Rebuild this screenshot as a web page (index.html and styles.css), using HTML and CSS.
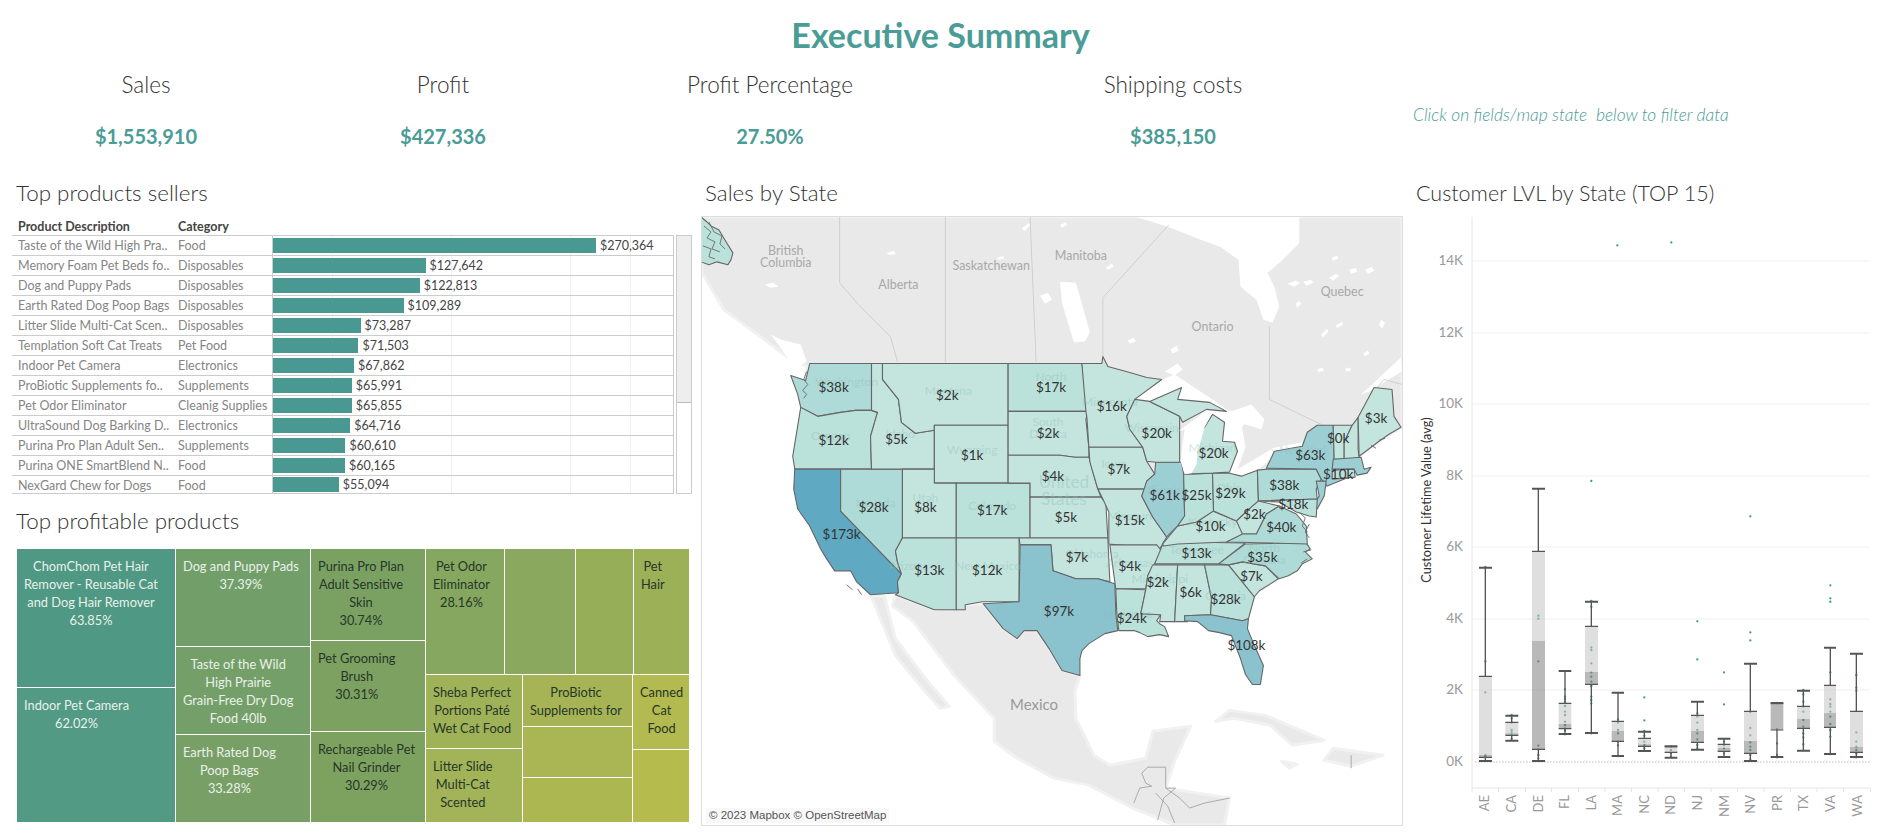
FILE: index.html
```html
<!DOCTYPE html>
<html lang="en">
<head>
<meta charset="utf-8">
<title>Executive Summary</title>
<link rel="stylesheet" href="styles.css">
</head>
<body>
<div class="page">
  <h1 class="title">Executive Summary</h1>
  <section class="kpis">
    <div class="kpi"><div class="kpi-label">Sales</div><div class="kpi-value">$1,553,910</div></div>
    <div class="kpi"><div class="kpi-label">Profit</div><div class="kpi-value">$427,336</div></div>
    <div class="kpi"><div class="kpi-label">Profit Percentage</div><div class="kpi-value">27.50%</div></div>
    <div class="kpi"><div class="kpi-label">Shipping costs</div><div class="kpi-value">$385,150</div></div>
    <div class="hint">Click on fields/map state&nbsp; below to filter data</div>
  </section>
  <main class="dash">
    <section class="col-left">
      <h2 class="heading">Top products sellers</h2>
      <div class="table-head"><span class="th-name">Product Description</span><span>Category</span></div>
      <div class="table-wrap">
        <div class="table">
          <div class="row"><span class="name">Taste of the Wild High Pra..</span><span class="cat">Food</span><div class="barcell"><i class="bar" style="width:323px"></i><span class="val">$270,364</span></div></div>
          <div class="row"><span class="name">Memory Foam Pet Beds fo..</span><span class="cat">Disposables</span><div class="barcell"><i class="bar" style="width:152.5px"></i><span class="val">$127,642</span></div></div>
          <div class="row"><span class="name">Dog and Puppy Pads</span><span class="cat">Disposables</span><div class="barcell"><i class="bar" style="width:146.7px"></i><span class="val">$122,813</span></div></div>
          <div class="row"><span class="name">Earth Rated Dog Poop Bags</span><span class="cat">Disposables</span><div class="barcell"><i class="bar" style="width:130.6px"></i><span class="val">$109,289</span></div></div>
          <div class="row"><span class="name">Litter Slide Multi-Cat Scen..</span><span class="cat">Disposables</span><div class="barcell"><i class="bar" style="width:87.6px"></i><span class="val">$73,287</span></div></div>
          <div class="row"><span class="name">Templation Soft Cat Treats</span><span class="cat">Pet Food</span><div class="barcell"><i class="bar" style="width:85.4px"></i><span class="val">$71,503</span></div></div>
          <div class="row"><span class="name">Indoor Pet Camera</span><span class="cat">Electronics</span><div class="barcell"><i class="bar" style="width:81.1px"></i><span class="val">$67,862</span></div></div>
          <div class="row"><span class="name">ProBiotic Supplements fo..</span><span class="cat">Supplements</span><div class="barcell"><i class="bar" style="width:78.8px"></i><span class="val">$65,991</span></div></div>
          <div class="row"><span class="name">Pet Odor Eliminator</span><span class="cat">Cleanig Supplies</span><div class="barcell"><i class="bar" style="width:78.7px"></i><span class="val">$65,855</span></div></div>
          <div class="row"><span class="name">UltraSound Dog Barking D..</span><span class="cat">Electronics</span><div class="barcell"><i class="bar" style="width:77.3px"></i><span class="val">$64,716</span></div></div>
          <div class="row"><span class="name">Purina Pro Plan Adult Sen..</span><span class="cat">Supplements</span><div class="barcell"><i class="bar" style="width:72.4px"></i><span class="val">$60,610</span></div></div>
          <div class="row"><span class="name">Purina ONE SmartBlend N..</span><span class="cat">Food</span><div class="barcell"><i class="bar" style="width:71.9px"></i><span class="val">$60,165</span></div></div>
          <div class="row row-last"><span class="name">NexGard Chew for Dogs</span><span class="cat">Food</span><div class="barcell"><i class="bar" style="width:65.8px"></i><span class="val">$55,094</span></div></div>
        </div>
        <div class="scroll"><div class="thumb"></div></div>
      </div>
      <h2 class="heading heading-2">Top profitable products</h2>
      <div class="tm">
        <div class="tm-col" style="flex-basis:158px">
          <div class="tile light" style="flex-basis:138px;background:#4f9883"><div class="tt">ChomChom Pet Hair<br>Remover - Reusable Cat<br>and Dog Hair Remover<br>63.85%</div></div>
          <div class="tile light grow" style="background:#529a84"><div class="tt">Indoor Pet Camera<br>62.02%</div></div>
        </div>
        <div class="tm-col" style="flex-basis:134px">
          <div class="tile light" style="flex-basis:97px;background:#729f69"><div class="tt">Dog and Puppy Pads<br>37.39%</div></div>
          <div class="tile light" style="flex-basis:87px;background:#759f68"><div class="tt">Taste of the Wild<br>High Prairie<br>Grain-Free Dry Dog<br>Food 40lb</div></div>
          <div class="tile light grow" style="background:#789f66"><div class="tt">Earth Rated Dog<br>Poop Bags<br>33.28%</div></div>
        </div>
        <div class="tm-col" style="flex-basis:114px">
          <div class="tile dark" style="flex-basis:91px;background:#7aa162"><div class="tt">Purina Pro Plan<br>Adult Sensitive<br>Skin<br>30.74%</div></div>
          <div class="tile dark" style="flex-basis:90px;background:#7ca160"><div class="tt">Pet Grooming<br>Brush<br>30.31%</div></div>
          <div class="tile dark grow" style="background:#7da260"><div class="tt">Rechargeable Pet<br>Nail Grinder<br>30.29%</div></div>
        </div>
        <div class="tm-rest">
          <div class="tm-row tm-top">
            <div class="tile dark" style="flex-basis:78px;background:#85a75f"><div class="tt">Pet Odor<br>Eliminator<br>28.16%</div></div>
            <div class="tile" style="flex-basis:70px;background:#8aa95e"></div>
            <div class="tile" style="flex-basis:57px;background:#97ae59"></div>
            <div class="tile dark grow" style="background:#9cb058"><div class="tt">Pet<br>Hair</div></div>
          </div>
          <div class="tm-row grow">
            <div class="tm-col" style="flex-basis:96px">
              <div class="tile dark" style="flex-basis:73px;background:#a0b258"><div class="tt">Sheba Perfect<br>Portions Paté<br>Wet Cat Food</div></div>
              <div class="tile dark grow" style="background:#a2b358"><div class="tt">Litter Slide<br>Multi-Cat<br>Scented</div></div>
            </div>
            <div class="tm-col" style="flex-basis:109px">
              <div class="tile dark" style="flex-basis:51px;background:#a7b455"><div class="tt">ProBiotic<br>Supplements for</div></div>
              <div class="tile" style="flex-basis:50px;background:#aab653"></div>
              <div class="tile grow" style="background:#adb752"></div>
            </div>
            <div class="tm-col grow">
              <div class="tile dark" style="flex-basis:74px;background:#b3ba4f"><div class="tt">Canned<br>Cat<br>Food</div></div>
              <div class="tile grow" style="background:#b6bb4e"></div>
            </div>
          </div>
        </div>
      </div>
    </section>

    <section class="col-mid">
      <h2 class="heading heading-m">Sales by State</h2>
      <div class="map">
        <svg class="map-svg" viewBox="701 217 702 610" width="700" height="608" preserveAspectRatio="none">
          <polygon class="land" points="701,217 1403,217 1403,428 1380,442 1360,457 1300,480 1200,480 800,420 806,367 786,357 754,333 723,310 701,273"/>
          <path class="water" d="M1130 215L1169 227 1194 237 1221 247 1239 260 1241 287 1257 300 1264 320 1273 323 1280 307 1275 287 1268 273 1280 263 1300 243 1300 215Z"/>
          <path class="water" d="M1060 282L1076 283 1090 333 1085 342 1074 343 1067 320 1062 303ZM1040 296L1048 293 1052 300 1045 304ZM1213 400L1228 411 1240 413 1246 448 1238 470 1272 450 1276 456 1258 471 1240 478 1230 473 1200 440ZM1272 449L1303 443 1303 447 1275 452ZM1232 412L1252 405 1265 420 1262 430 1245 425 1240 430ZM1362 395L1402 358 1403 372 1370 392ZM1135 400L1162 380 1175 375 1213 400 1210 403 1178 400 1182 388 1150 402ZM1165 372L1178 364 1183 370 1175 376Z"/>
          <path class="water" d="M1288 284l8-3 5 2-6 4ZM1304 282l8-2 2 3-7 3ZM1330 278l7-4 3 2-6 5ZM1350 270l7-2 1 4-6 2ZM1366 270l7-3 2 4-6 3ZM1332 258l6-2 1 3-5 2ZM1322 335l6-6 1 3-5 6ZM1336 326l7-4 1 3-6 3ZM1382 320l4 3-3 6-3-4ZM1318 370l5-2 2 3-5 2ZM1346 369l5-1 1 3-5 1ZM1364 354l5-3 1 3-4 3ZM1296 304l4-3 2 3-4 4ZM1128 341l6-3 2 4-6 2ZM1171 350l6-4 2 5-6 3ZM1106 268l6-4 2 3-6 3ZM1060 225l6-3 1 3-5 3ZM1022 228l7-5 1 3-6 5ZM997 258l6-2 1 3-6 1ZM886 253l7-2 3 3-7 1ZM764 285l8-2 6 4-8 1Z"/>
          <path class="water" d="M790 372L806 362 800 345 780 340 770 335 786 357Z"/>
          <path class="province" d="M839 217V283L858 305 890 337 897 362M945 217V363M1030 217L1036 362M1103 358V298L1169 225M1270 327V400L1307 418 1322 425M1372 395L1385 380 1403 385"/>
          <polygon class="land" points="895,596 934,611 965,606 983,605 1003,630 1017,640 1024,632 1037,632 1049,650 1062,672 1080,677 1075,693 1076,720 1094,757 1110,767 1146,760 1153,733 1191,728 1175,763 1166,790 1230,800 1225,827 1175,827 1133,810 1089,787 1054,780 1017,760 994,743 994,720 954,677 913,623 892,607"/>
          <polygon class="land" points="870,596 884,598 895,640 925,680 949,708 940,710 922,690 895,657"/>
          <polygon class="land" points="1216,723 1230,712 1266,717 1325,742 1293,747 1271,727 1235,720"/>
          <polygon class="land" points="1334,750 1384,757 1352,768 1325,762"/>
          <polygon class="land" points="1282,763 1298,766 1290,770"/>
          <path class="country" d="M1148 769H1166V790L1176 790 1164 800 1158 822M1148 769L1142 775 1146 785 1152 788 1140 790 1134 805M1156 795L1168 808 1175 825M1166 790L1180 800 1190 810 1205 805 1230 800M1352 757V770"/>

          <polygon class="s1" points="700,217 706,222 710,226 718,230 724,240 732,253 730,260 727,265 716,262 708,265 700,262"/>
          <path class="coast" d="M703 226l7 6-4 6 8 4-3 7 8 3M708 222l5 10 8 4-2 8 5 5M702 246l8 3-2 8 6 2"/>

          <polygon class="s2" points="809,364 871,364 871,411 855,411 840,413 817,417 800,408 797,395 790,376 805,381"/>
          <polygon class="s1" points="800,408 817,417 840,413 855,411 871,411 877,413 870,437 871,470 794,470 792,457"/>
          <polygon class="s5" points="794,470 840,470 840,512 901,575 897,583 898,594 870,596 856,583 850,572 834,572 826,560 820,550 809,527 797,510 793,490"/>
          <polygon class="s2" points="840,470 902,470 902,539 895,552 897,563 901,575 840,512"/>
          <polygon class="s0" points="871,364 882,364 882,380 898,400 901,423 915,434 934,431 934,470 871,470 870,437 877,413 871,411"/>
          <polygon class="s0" points="882,364 1008,364 1008,426 934,426 934,431 915,434 901,423 898,400 882,380"/>
          <polygon class="s0" points="934,426 1008,426 1008,484 934,484"/>
          <polygon class="s0" points="902,470 934,470 934,484 956,484 956,539 902,539"/>
          <polygon class="s1" points="956,484 1030,484 1030,539 956,539"/>
          <polygon class="s1" points="902,539 956,539 956,611 934,611 895,596 898,594 897,583 901,575 897,563 895,552"/>
          <polygon class="s0" points="956,539 1019,539 1019,603 982,603 965,606 965,611 956,611"/>
          <polygon class="s1" points="1008,364 1082,364 1088,412 1008,412"/>
          <polygon class="s0" points="1008,412 1088,412 1086,420 1089,449 1089,458 1075,458 1060,456 1008,456"/>
          <polygon class="s0" points="1008,456 1060,456 1075,458 1089,458 1097,487 1101,498 1030,498 1030,484 1008,484"/>
          <polygon class="s0" points="1030,498 1101,498 1106,504 1108,539 1030,539"/>
          <polygon class="s0" points="1019,539 1108,539 1110,583 1098,580 1076,580 1053,572 1051,546 1020,546"/>
          <polygon class="s4" points="1020,546 1051,546 1053,572 1076,580 1098,580 1115,585 1116,615 1118,632 1105,635 1089,645 1082,652 1080,660 1080,677 1062,672 1049,650 1037,632 1024,632 1017,640 1003,630 983,605 1019,603"/>
          <polygon class="s0" points="1082,364 1102,364 1103,357 1108,367 1130,373 1147,378 1162,380 1135,400 1127,417 1130,430 1143,448 1089,448 1087,418 1086,412"/>
          <polygon class="s0" points="1089,448 1143,448 1147,462 1155,475 1147,482 1145,490 1098,490 1090,463"/>
          <polygon class="s0" points="1098,490 1145,490 1142,497 1153,518 1167,538 1163,545 1160,550 1109,545 1109,513 1103,500"/>
          <polygon class="s0" points="1110,546 1157,546 1162,552 1148,577 1146,590 1116,590 1115,583"/>
          <polygon class="s1" points="1116,590 1146,591 1141,615 1161,616 1157,622 1160,625 1165,628 1169,638 1160,636 1148,638 1140,634 1135,632 1119,632 1117,615"/>
          <polygon class="s0" points="1153,566 1178,566 1175,623 1160,623 1161,616 1141,615 1146,591 1148,577"/>
          <polygon class="s0" points="1178,566 1205,566 1212,600 1211,616 1185,617 1188,623 1175,623"/>
          <polygon class="s1" points="1205,566 1229,566 1255,598 1249,620 1243,622 1211,616 1212,600"/>
          <polygon class="s4" points="1185,617 1211,616 1243,622 1249,620 1248,630 1255,647 1264,667 1261,686 1253,686 1246,676 1241,660 1232,637 1220,634 1209,632 1198,623 1185,622"/>
          <polygon class="s0" points="1229,566 1243,563 1266,567 1279,580 1260,592 1255,598"/>
          <polygon class="s2" points="1219,565 1246,545 1307,544 1311,550 1306,553 1313,560 1303,565 1298,572 1289,577 1280,580 1266,567 1243,563 1229,566"/>
          <polygon class="s1" points="1155,565 1164,543 1180,543 1246,544 1219,565"/>
          <polygon class="s0" points="1163,545 1178,527 1197,523 1213,512 1237,522 1245,535 1227,543 1178,545 1164,547"/>
          <polygon class="s3" points="1156,463 1182,463 1184,475 1185,517 1178,527 1167,538 1153,518 1142,497 1147,482 1155,475"/>
          <polygon class="s1" points="1184,475 1213,474 1214,512 1197,523 1178,527 1185,517"/>
          <polygon class="s1" points="1213,474 1230,474 1242,477 1258,471 1259,502 1253,507 1237,522 1214,512"/>
          <polygon class="s0" points="1184,475 1198,453 1193,438 1205,428 1213,415 1225,423 1223,442 1235,443 1238,452 1230,473 1213,474"/>
          <polygon class="s0" points="1127,417 1135,400 1150,402 1180,417 1180,463 1156,463 1147,462 1143,448 1130,430"/>
          <polygon class="s0" points="1150,402 1182,388 1178,400 1210,403 1227,412 1207,410 1183,423 1180,417"/>
          <polygon class="s2" points="1258,471 1267,470 1317,470 1322,480 1317,490 1318,500 1259,502"/>
          <polygon class="s3" points="1267,469 1275,452 1303,447 1308,433 1318,426 1334,426 1335,460 1333,478 1352,477 1328,487 1322,480 1317,470"/>
          <polygon class="s3" points="1317,482 1327,482 1325,497 1318,510 1313,507 1320,497"/>
          <polygon class="s1" points="1259,502 1318,500 1317,518 1310,517 1297,513 1280,503 1259,502"/>
          <polygon class="s0" points="1259,502 1280,507 1267,515 1257,535 1243,535 1237,522 1253,507"/>
          <polygon class="s2" points="1227,543 1243,535 1257,535 1267,515 1280,507 1297,515 1307,527 1308,545"/>
          <polygon class="s0" points="1334,426 1353,426 1345,443 1345,460 1335,460"/>
          <polygon class="s0" points="1353,426 1359,418 1359,450 1360,459 1345,460 1345,443"/>
          <polygon class="s0" points="1359,418 1375,388 1393,390 1395,417 1402,428 1390,435 1380,442 1372,448 1360,457"/>
          <polygon class="s3" points="1334,460 1362,458 1365,470 1372,468 1368,474 1358,476 1355,470 1333,470"/>
          <polygon class="s1" points="1333,471 1355,470 1356,478 1333,480"/>
          <polygon class="water lake" points="1179,432 1207,411 1213,413 1205,428 1198,453 1197,465 1192,474 1185,475 1181,462 1183,445 1185,430"/>
          <path class="coast" d="M806 372l-3 8 4 5-5 6 4 4-3 4M1300 513l6 6-3 8 5 6M1310 525l-4 8 4 6M1372 446l5 3M1380 441l6-2M1304 553l8-2M1308 560l-6 4M861 596l-4-6M846 586l6 5"/>

          <g class="ghost">
            <text x="846" y="384">Washington</text><text x="948" y="393">Montana</text><text x="1051" y="379">North</text><text x="1110" y="404">Minnesota</text><text x="1048" y="424">South</text><text x="1048" y="436">Dakota</text><text x="972" y="452">Wyoming</text><text x="1152" y="430">Wisconsin</text><text x="1213" y="450">Michigan</text><text x="1305" y="452">New York</text><text x="1114" y="466">Iowa</text><text x="830" y="438">Oregon</text><text x="900" y="436">Idaho</text><text x="875" y="505">Nevada</text><text x="925" y="500">Utah</text><text x="992" y="508">Colorado</text><text x="1130" y="518">Missouri</text><text x="1165" y="492">Illinois</text><text x="1230" y="490">Ohio</text><text x="1213" y="524">Kentucky</text><text x="1197" y="552">Tennessee</text><text x="1265" y="550">North</text><text x="1265" y="562">Carolina</text><text x="1092" y="556">Oklahoma</text><text x="1130" y="565">Arkansas</text><text x="1160" y="581">Mississippi</text><text x="908" y="568">Arizona</text><text x="988" y="568">New Mexico</text><text x="1055" y="608">Texas</text><text x="1128" y="616">Louisiana</text><text x="1226" y="598">Georgia</text>
            <text class="ghost-big" x="1064" y="485">United</text><text class="ghost-big" x="1064" y="502">States</text>
          </g>
          <g class="place">
            <text x="785" y="252">British</text><text x="785" y="264">Columbia</text><text x="898" y="286">Alberta</text><text x="991" y="267">Saskatchewan</text><text x="1081" y="257">Manitoba</text><text x="1213" y="328">Ontario</text><text x="1343" y="293">Quebec</text>
            <text class="mexico" x="1034" y="708">Mexico</text>
          </g>
          <g class="mlabels">
            <text x="833" y="389">$38k</text><text x="947" y="397">$2k</text><text x="1051" y="389">$17k</text><text x="1112" y="408">$16k</text><text x="1377" y="420">$3k</text><text x="1339" y="440">$0k</text><text x="1157" y="435">$20k</text><text x="1214" y="455">$20k</text><text x="1311" y="457">$63k</text><text x="833" y="442">$12k</text><text x="896" y="441">$5k</text><text x="1048" y="435">$2k</text><text x="972" y="457">$1k</text><text x="1053" y="478">$4k</text><text x="1119" y="471">$7k</text><text x="1339" y="476">$10k</text><text x="1285" y="487">$38k</text><text x="1165" y="498">$61k</text><text x="1197" y="498">$25k</text><text x="1231" y="496">$29k</text><text x="1294" y="507">$18k</text><text x="873" y="510">$28k</text><text x="925" y="510">$8k</text><text x="992" y="513">$17k</text><text x="1066" y="520">$5k</text><text x="1130" y="523">$15k</text><text x="1255" y="517">$2k</text><text x="1211" y="529">$10k</text><text x="1282" y="530">$40k</text><text x="841" y="537">$173k</text><text x="1197" y="556">$13k</text><text x="1263" y="560">$35k</text><text x="1077" y="560">$7k</text><text x="1130" y="569">$4k</text><text x="1252" y="579">$7k</text><text x="1158" y="585">$2k</text><text x="1191" y="595">$6k</text><text x="1226" y="602">$28k</text><text x="929" y="573">$13k</text><text x="987" y="573">$12k</text><text x="1059" y="614">$97k</text><text x="1132" y="621">$24k</text><text x="1247" y="648">$108k</text>
          </g>
        </svg>
        <div class="attrib">© 2023 Mapbox © OpenStreetMap</div>
      </div>
    </section>

    <section class="col-right">
      <h2 class="heading heading-r">Customer LVL by State (TOP 15)</h2>
      <svg class="chart" viewBox="1403 217 478 622" width="478" height="622">
        <path class="grid" d="M1472 261H1870M1472 333H1870M1472 404H1870M1472 476H1870M1472 547H1870M1472 619H1870M1472 690H1870"/>
        <path class="axis" d="M1472 215V788H1871M1472 788v4M1498.500 788v4M1525.500 788v4M1551.500 788v4M1578.500 788v4M1605 788v4M1631.500 788v4M1658 788v4M1684.500 788v4M1711 788v4M1737.500 788v4M1764 788v4M1790.500 788v4M1817 788v4M1843.500 788v4M1870.500 788v4"/>
        <path class="zero" d="M1475 762H1870"/>
        <g class="ylab">
          <text x="1463" y="262">14K</text><text x="1463" y="334">12K</text><text x="1463" y="405">10K</text><text x="1463" y="477">8K</text><text x="1463" y="548">6K</text><text x="1463" y="620">4K</text><text x="1463" y="691">2K</text><text x="1463" y="763">0K</text>
        </g>
        <text class="ytitle" transform="translate(1428 500) rotate(-90)">Customer Lifetime Value (avg)</text>
        <g transform="translate(1400 500) scale(.33333)">
          <path class="dots" d="M256 201h0M256 484h0M256 577h0M256 765h0M256 770h0M335 645h0M335 655h0M335 668h0M335 690h0M335 697h0M335 706h0M335 716h0M415 347h0M415 356h0M415 484h0M415 737h0M415 748h0M415 765h0M415 775h0M495 568h0M495 590h0M495 597h0M495 605h0M495 618h0M495 635h0M495 645h0M495 665h0M495 675h0M495 685h0M495 692h0M495 703h0M574 -57h0M574 303h0M574 320h0M574 442h0M574 450h0M574 490h0M574 517h0M574 530h0M574 545h0M574 558h0M574 590h0M574 600h0M574 610h0M574 700h0M652 -764h0M654 658h0M654 668h0M654 690h0M654 700h0M654 725h0M654 736h0M654 768h0M733 592h0M733 661h0M733 693h0M733 707h0M733 725h0M733 735h0M733 745h0M814 -773h0M813 740h0M813 750h0M813 760h0M813 770h0M892 364h0M892 478h0M892 640h0M892 650h0M892 668h0M892 690h0M892 700h0M892 718h0M892 735h0M892 745h0M972 517h0M972 613h0M972 725h0M972 735h0M972 745h0M972 760h0M1051 49h0M1051 397h0M1051 421h0M1051 636h0M1051 684h0M1051 706h0M1051 727h0M1051 740h0M1051 750h0M1051 765h0M1051 778h0M1131 609h0M1131 688h0M1131 730h0M1131 765h0M1131 772h0M1210 570h0M1210 583h0M1210 605h0M1210 620h0M1210 635h0M1210 660h0M1210 680h0M1210 700h0M1210 712h0M1210 733h0M1291 256h0M1291 295h0M1291 305h0M1291 517h0M1291 598h0M1291 612h0M1291 620h0M1291 635h0M1291 650h0M1291 672h0M1291 690h0M1291 710h0M1291 762h0M1369 525h0M1369 563h0M1369 572h0M1369 697h0M1369 725h0M1369 740h0M1369 750h0M1369 760h0M1369 772h0"/>
          <path class="box-up" d="M237 529H276V765H237ZM316 667H355V700H316ZM396 154H435V423H396ZM476 610H514V672H476ZM555 379H594V516H555ZM635 664H672V693H635ZM714 715H753V733H714ZM794 740H832V755H794ZM873 646H912V693H873ZM953 733H991V744H953ZM1032 634H1071V723H1032ZM1112 611H1150V613H1112ZM1191 619H1230V657H1191ZM1272 556H1308V639H1272ZM1350 634H1389V741H1350Z"/>
          <path class="box-lo" d="M237 765H276V772H237ZM316 700H355V706H316ZM396 423H435V748H396ZM476 672H514V686H476ZM555 516H594V553H555ZM635 693H672V724H635ZM714 733H753V739H714ZM794 755H832V757H794ZM873 693H912V727H873ZM953 744H991V754H953ZM1032 723H1071V760H1032ZM1112 613H1150V690H1112ZM1191 657H1230V685H1191ZM1272 639H1308V682H1272ZM1350 741H1389V757H1350Z"/>
          <path class="whisk" d="M256 203V529M256 772V783M335 647V667M335 706V722M415 -34V154M415 748V783M495 513V610M495 686V702M574 305V379M574 553V699M654 578V664M654 724V768M733 695V715M733 739V753M813 739V740M813 757V773M892 605V646M892 727V749M972 716V733M972 754V771M1051 491V634M1051 760V783M1131 609V611M1131 690V771M1210 572V619M1210 685V752M1291 443V556M1291 682V762M1369 461V634M1369 757V771"/>
          <path class="edge" d="M237 529H276M237 772H276M316 667H355M316 706H355M396 154H435M396 748H435M476 610H514M476 686H514M555 379H594M555 553H594M635 664H672M635 724H672M714 715H753M714 739H753M794 740H832M794 757H832M873 646H912M873 727H912M953 733H991M953 754H991M1032 634H1071M1032 760H1071M1112 611H1150M1112 690H1150M1191 619H1230M1191 685H1230M1272 556H1308M1272 682H1308M1350 634H1389M1350 757H1389"/>
          <path class="cap" d="M237 203H276M237 783H276M316 647H355M316 722H355M396 -34H435M396 783H435M476 513H514M476 702H514M555 305H594M555 699H594M635 578H672M635 768H672M714 695H753M714 753H753M794 739H832M794 773H832M873 605H912M873 749H912M953 716H991M953 771H991M1032 491H1071M1032 783H1071M1112 609H1150M1112 771H1150M1191 572H1230M1191 752H1230M1272 443H1308M1272 762H1308M1350 461H1389M1350 771H1389"/>
        </g>
        <g class="xlab">
          <text transform="translate(1486 795) rotate(-90)">AE</text><text transform="translate(1513 795) rotate(-90)">CA</text><text transform="translate(1540 795) rotate(-90)">DE</text><text transform="translate(1566 795) rotate(-90)">FL</text><text transform="translate(1593 795) rotate(-90)">LA</text><text transform="translate(1619 795) rotate(-90)">MA</text><text transform="translate(1646 795) rotate(-90)">NC</text><text transform="translate(1672 795) rotate(-90)">ND</text><text transform="translate(1699 795) rotate(-90)">NJ</text><text transform="translate(1726 795) rotate(-90)">NM</text><text transform="translate(1752 795) rotate(-90)">NV</text><text transform="translate(1779 795) rotate(-90)">PR</text><text transform="translate(1805 795) rotate(-90)">TX</text><text transform="translate(1832 795) rotate(-90)">VA</text><text transform="translate(1859 795) rotate(-90)">WA</text>
        </g>
      </svg>
    </section>
  </main>
</div>
</body>
</html>
```

FILE: styles.css
```css
* { box-sizing: border-box; }
html, body { margin: 0; padding: 0; background: #fff; }
body { font-family: Lato, "Open Sans", sans-serif; color: #333; overflow: hidden; }
.page { width: 1881px; height: 839px; overflow: hidden; }

.title {
  margin: 0;
  height: 64px;
  padding-top: 13px;
  line-height: 44px;
  font-size: 34px;
  font-weight: 700;
  text-align: center;
  color: #4a9c96;
}

.kpis {
  display: grid;
  grid-template-columns: 292px 302px 352px 454px 1fr;
  height: 106px;
  padding-top: 7px;
}
.kpi { text-align: center; }
.kpi-label { font-size: 22.500px; font-weight: 300; line-height: 28px; color: #333; }
.kpi-value { margin-top: 23px; font-size: 20px; font-weight: 700; line-height: 28px; color: #4a9c96; }
.hint {
  padding: 32px 0 0 13px;
  font-size: 17.400px;
  font-weight: 300;
  font-style: italic;
  line-height: 24px;
  color: #4a9c96;
  white-space: nowrap;
}

.dash { display: grid; grid-template-columns: 701px 702px 478px; height: 669px; }
.heading { margin: 10px 0 11px; font-size: 22.400px; font-weight: 300; line-height: 26px; color: #333; white-space: nowrap; }
.col-left { padding-left: 12px; }
.col-left .heading { padding-left: 4px; }
.col-left .heading-2 { margin: 14px 0 15px; }
.heading-m { padding-left: 4px; }
.heading-r { padding-left: 13px; font-size: 21.500px; }

.table-head {
  display: flex;
  height: 18px;
  line-height: 20px;
  font-size: 12.500px;
  font-weight: 700;
  color: #444;
  padding-left: 6px;
}
.th-name { width: 160px; }

.table-wrap { display: flex; gap: 2px; width: 680px; }
.table { width: 662px; border-top: 1px solid #ccc; }
.row { display: flex; height: 20px; border-bottom: 1px solid #ccc; font-size: 12.500px; line-height: 19px; color: #858585; }
.row-last { height: 18px; }
.name { width: 166px; padding-left: 6px; white-space: nowrap; overflow: hidden; }
.cat { width: 94px; white-space: nowrap; overflow: hidden; }
.barcell {
  flex: 1;
  display: flex;
  align-items: center;
  gap: 4px;
  border-left: 1px solid #ccc;
  border-right: 1px solid #ccc;
  background-image: repeating-linear-gradient(90deg, transparent 0, transparent 59px, #f0f0f0 59px, #f0f0f0 59.600px);
}
.bar { display: block; height: 15px; background: #4a9892; }
.val { color: #444; font-size: 12.500px; }
.scroll { width: 16px; border: 1px solid #ccc; background: #fff; }
.thumb { height: 167px; background: #eee; border-bottom: 1px solid #bbb; }

.tm { display: flex; gap: 1px; width: 672px; height: 273px; margin-left: 5px; font-size: 12.800px; line-height: 18px; }
.tm-col { display: flex; flex-direction: column; gap: 1px; flex: 0 0 auto; }
.tm-rest { display: flex; flex-direction: column; gap: 1px; flex: 1; }
.tm-row { display: flex; gap: 1px; }
.tm-top { flex: 0 0 125px; }
.grow { flex: 1 1 0; }
.tile { flex: 0 0 auto; padding: 8px 0 0 7px; overflow: hidden; white-space: nowrap; }
.tile.grow { flex: 1 1 0; }
.tm-col.grow { flex: 1 1 0; }
.tt { display: inline-block; text-align: center; }
.light { color: #e9f1ea; }
.dark { color: #26362a; }

.map { position: relative; width: 702px; height: 610px; margin-top: -1px; border: 1px solid #ddd; background: #fff; }
.map-svg { display: block; }
.land { fill: #e9e9e9; stroke: #f1f1f1; stroke-width: 3; stroke-linejoin: round; }
.water { fill: #fff; }
.province { fill: none; stroke: #c4c4c4; stroke-width: .7; }
.country { fill: none; stroke: #9a9a9a; stroke-width: .8; }
.coast { fill: none; stroke: #6a6a6a; stroke-width: .9; }
.s0, .s1, .s2, .s3, .s4, .s5 { stroke: #666; stroke-width: 1.100; stroke-linejoin: round; }
.s0 { fill: #c3e5de; }
.s1 { fill: #bbe1db; }
.s2 { fill: #aedbd7; }
.s3 { fill: #9ccfd4; }
.s4 { fill: #8ac3ce; }
.s5 { fill: #5fa9c2; }
.lake { stroke: none; }
.ghost text { font-size: 12px; fill: #8cbdb9; opacity: .38; text-anchor: middle; dominant-baseline: middle; }
.ghost .ghost-big { font-size: 17px; }
.place text { font-size: 12.500px; fill: #a8a8a8; text-anchor: middle; dominant-baseline: middle; }
.place .mexico { font-size: 15px; fill: #999; }
.mlabels text { font-size: 13.500px; fill: #333; text-anchor: middle; dominant-baseline: middle; }
.attrib {
  position: absolute;
  left: 4px;
  bottom: 2px;
  padding: 1px 3px;
  font-family: "Liberation Sans", sans-serif;
  font-size: 11.500px;
  line-height: 13px;
  color: #555;
  background: rgba(245, 245, 245, .7);
  white-space: nowrap;
}

.chart { display: block; }
.grid { stroke: #f0f0f0; stroke-width: 1; fill: none; }
.axis { stroke: #e6e6e6; stroke-width: 1; fill: none; }
.zero { stroke: #bbb; stroke-width: 1; stroke-dasharray: 1.500 1.500; fill: none; }
.ylab text { font-size: 13.500px; fill: #999; text-anchor: end; dominant-baseline: middle; }
.xlab text { font-size: 13px; fill: #999; text-anchor: end; dominant-baseline: middle; }
.ytitle { font-size: 12.700px; fill: #333; text-anchor: middle; dominant-baseline: middle; }
.dots { fill: none; stroke: #3f9a92; stroke-width: 7; stroke-linecap: round; }
.box-up { fill: rgba(196, 196, 196, .55); }
.box-lo { fill: rgba(120, 120, 120, .52); }
.whisk { fill: none; stroke: #555; stroke-width: 4; }
.edge { fill: none; stroke: #555; stroke-width: 3.500; }
.cap { fill: none; stroke: #555; stroke-width: 6; }
```
